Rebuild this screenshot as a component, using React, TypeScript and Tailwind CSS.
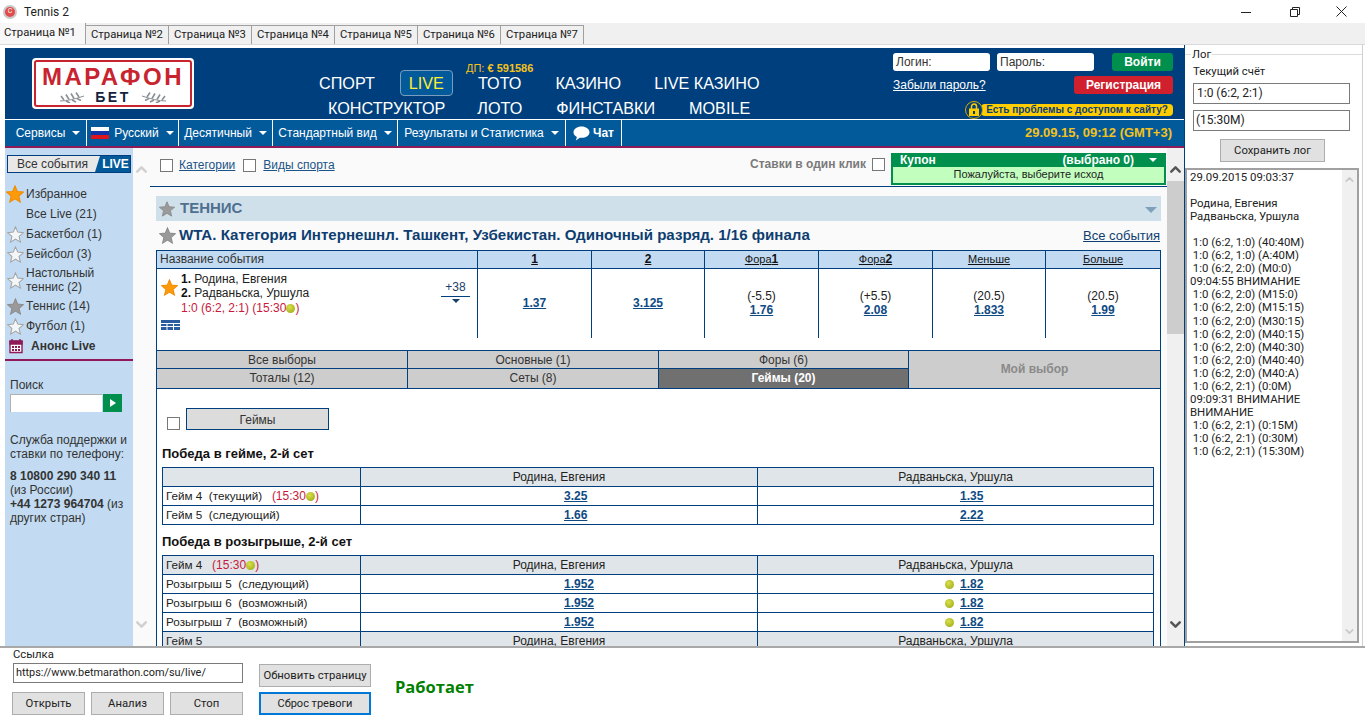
import { ChevronDown, ChevronUp } from 'lucide-react'

const tabs = ['Страница №2', 'Страница №3', 'Страница №4', 'Страница №5', 'Страница №6', 'Страница №7']

const sports = [
  { label: 'Баскетбол (1)', star: 'empty' },
  { label: 'Бейсбол (3)', star: 'empty' },
  { label: 'Настольный теннис (2)', star: 'empty', tall: true },
  { label: 'Теннис (14)', star: 'grey' },
  { label: 'Футбол (1)', star: 'empty' },
]

const logLines = [
  '29.09.2015 09:03:37',
  '\u00a0',
  'Родина, Евгения',
  'Радваньска, Уршула',
  '\u00a0',
  ' 1:0 (6:2, 1:0) (40:40M)',
  ' 1:0 (6:2, 1:0) (A:40M)',
  ' 1:0 (6:2, 2:0) (M0:0)',
  '09:04:55 ВНИМАНИЕ',
  ' 1:0 (6:2, 2:0) (M15:0)',
  ' 1:0 (6:2, 2:0) (M15:15)',
  ' 1:0 (6:2, 2:0) (M30:15)',
  ' 1:0 (6:2, 2:0) (M40:15)',
  ' 1:0 (6:2, 2:0) (M40:30)',
  ' 1:0 (6:2, 2:0) (M40:40)',
  ' 1:0 (6:2, 2:0) (M40:A)',
  ' 1:0 (6:2, 2:1) (0:0M)',
  '09:09:31 ВНИМАНИЕ',
  'ВНИМАНИЕ',
  ' 1:0 (6:2, 2:1) (0:15M)',
  ' 1:0 (6:2, 2:1) (0:30M)',
  ' 1:0 (6:2, 2:1) (15:30M)',
]

function StarIcon({ kind, size = 18 }: { kind: string; size?: number }) {
  const fill = kind === 'orange' ? '#ff9a0a' : kind === 'grey' ? '#9a9a9a' : '#f4f6f8'
  const stroke = kind === 'orange' ? '#f08c00' : kind === 'grey' ? '#8c8c8c' : '#a3a3a3'
  return (
    <svg width={size} height={size} viewBox="0 0 20 20" className="shrink-0">
      <polygon
        points="10,1 12.6,7.2 19.4,7.8 14.2,12.2 15.8,18.9 10,15.3 4.2,18.9 5.8,12.2 0.6,7.8 7.4,7.2"
        fill={fill}
        stroke={stroke}
        strokeWidth="1.2"
      />
    </svg>
  )
}

function Caret({ color = 'border-t-white' }: { color?: string }) {
  return <span className={`inline-block w-0 h-0 border-x-[4px] border-x-transparent border-t-[4px] ${color}`} />
}

function Ball() {
  return <span className="inline-block w-[9px] h-[9px] rounded-full bg-[radial-gradient(circle_at_40%_35%,#d9e04a,#97a414)] align-[-1px]" />
}

function Laurel({ flip }: { flip?: boolean }) {
  return (
    <svg width="26" height="12" viewBox="0 0 26 12" className={flip ? '-scale-x-100' : ''}>
      <path d="M1 10 C8 10 16 8 25 5" stroke="#8a8f94" strokeWidth="1" fill="none" />
      <path d="M5 9 L2 5 M10 8.5 L7 3.5 M15 7.5 L12 2.5 M20 6 L17 1.5 M7 10 L11 12 M13 9 L17 11 M18 7.5 L22 9.5" stroke="#8a8f94" strokeWidth="1.6" fill="none" />
    </svg>
  )
}

function Logo() {
  return (
    <div className="ml-[27px] mt-[10px] w-[162px] h-[51px] bg-white rounded-[4px] p-[2px] shrink-0">
      <div className="h-full border-2 border-[#c8242f] rounded-[3px] flex flex-col items-center">
        <div className="h-[27px] pt-[3px] text-[24px] leading-[24px] font-bold tracking-[2.5px] text-[#c8242f]">МАРАФОН</div>
        <div className="flex items-center gap-[10px] mt-[2px]">
          <Laurel />
          <span className="text-[14px] leading-[12px] font-bold tracking-[2.5px] text-[#14233f]">БЕТ</span>
          <Laurel flip />
        </div>
      </div>
    </div>
  )
}

function Header() {
  return (
    <div className="flex h-[71px] bg-[#003f7d] shrink-0">
      <Logo />
      {/* main menu */}
      <div className="ml-[125px] w-[574px] shrink-0 text-white text-[16.2px] leading-[25px]">
        <div className="h-[22px] pt-[14px] pl-[147px] text-[11px] leading-[12px] text-[#f4c21b]">
          ДП: <b>€ 591586</b>
        </div>
        <div className="flex items-center h-[26px]">
          <span>СПОРТ</span>
          <span className="ml-[25px] w-[53px] h-[26px] flex items-center justify-center rounded-[4px] border border-[#7b9dbd] bg-[#035a9b] text-[#ffee33]">LIVE</span>
          <span className="ml-[25px]">ТОТО</span>
          <span className="ml-[34px]">КАЗИНО</span>
          <span className="ml-[33px]">LIVE КАЗИНО</span>
        </div>
        <div className="flex items-center h-[25px]">
          <span className="ml-[9px]">КОНСТРУКТОР</span>
          <span className="ml-[32px]">ЛОТО</span>
          <span className="ml-[34px]">ФИНСТАВКИ</span>
          <span className="ml-[34px]">MOBILE</span>
        </div>
      </div>
      {/* login */}
      <div className="w-[280px] shrink-0 pt-[5px] text-[12px]">
        <div className="flex h-[18px]">
          <div className="w-[97px] bg-white rounded-[3px] pl-[3px] leading-[18px] text-[#333]">Логин:</div>
          <div className="ml-[7px] w-[97px] bg-white rounded-[3px] pl-[3px] leading-[18px] text-[#333]">Пароль:</div>
          <div className="ml-[18px] w-[61px] bg-[#008f4c] rounded-[3px] text-white font-bold text-center leading-[18px]">Войти</div>
        </div>
        <div className="flex h-[18px] mt-[5px]">
          <span className="text-white underline leading-[18px]">Забыли пароль?</span>
          <div className="ml-auto w-[99px] bg-[#d0202e] rounded-[3px] text-white font-bold text-center leading-[18px]">Регистрация</div>
        </div>
        <div className="flex items-center mt-[7px] h-[17px] pl-[72px]">
          <span className="w-[18px] h-[18px] rounded-full bg-[#003f7d] border border-[#d9a900] flex items-center justify-center shrink-0 z-10">
            <svg width="10" height="13" viewBox="0 0 10 13">
              <path d="M2.5 6V3.5a2.5 2.5 0 0 1 5 0V6" stroke="#ffcc00" strokeWidth="1.5" fill="none" />
              <path d="M0 5.5h10V13H0z" fill="#ffcc00" />
              <path d="M4 8h2v3H4z" fill="#003f7d" />
            </svg>
          </span>
          <span className="-ml-[2px] w-[192px] h-[12px] bg-[#ffcc00] rounded-[4px] text-[10px] leading-[12px] font-bold text-[#0b3f78] text-center">Есть проблемы с доступом к сайту?</span>
        </div>
      </div>
    </div>
  )
}

function NavItem({ width, children }: { width: string; children: React.ReactNode }) {
  return (
    <div className={`${width} h-full border-r border-white flex items-center justify-center gap-[7px] shrink-0`}>
      {children}
    </div>
  )
}

function NavBar() {
  return (
    <div className="flex items-center h-[26px] bg-[#035a9b] text-white text-[12px] mt-[1px] shrink-0">
      <NavItem width="w-[82px] pl-[5px]">Сервисы <Caret /></NavItem>
      <NavItem width="w-[92px]">
        <span className="flex flex-col w-[18px] h-[13px] shrink-0 -mr-[2px]">
          <span className="h-1/3 bg-white" />
          <span className="h-1/3 bg-[#1436a8]" />
          <span className="h-1/3 bg-[#e0141c]" />
        </span>
        Русский <Caret />
      </NavItem>
      <NavItem width="w-[94px]">Десятичный <Caret /></NavItem>
      <NavItem width="w-[125px]">Стандартный вид <Caret /></NavItem>
      <NavItem width="w-[168px]">Результаты и Статистика <Caret /></NavItem>
      <NavItem width="w-[56px]">
        <span className="flex items-center gap-[3px] font-bold">
          <svg width="17" height="15" viewBox="0 0 17 15">
            <path d="M8.5 0.5C4 0.5 0.5 3 0.5 6.2c0 2 1.3 3.7 3.4 4.7L2.8 14.5l4.1-2.8c.5.1 1 .1 1.6.1 4.5 0 8-2.5 8-5.6S13 .5 8.5.5z" fill="#fff" />
          </svg>
          Чат
        </span>
      </NavItem>
      <div className="ml-auto pr-[12px] text-[13px] font-bold text-[#f4c21b]">29.09.15, 09:12 (GMT+3)</div>
    </div>
  )
}

function Sidebar() {
  return (
    <div className="w-[128px] shrink-0 bg-[#c2dbf2] text-[12px] leading-[14px] text-[#333]">
      <div className="flex h-[18px] mt-[7px] ml-[2px] w-[124px] border border-[#003f7d] bg-[#e8e8e8]">
        <div className="w-[90px] pl-[9px] leading-[16px] whitespace-nowrap">Все события</div>
        <div className="flex-1 -ml-[3px] pl-[6px] bg-[#035a9b] text-white font-bold text-center leading-[16px] [clip-path:polygon(5px_0,100%_0,100%_100%,0_100%)]">LIVE</div>
      </div>
      <div className="mt-[11px]">
        <div className="h-[20px] flex items-center pl-[1px] gap-[1px]">
          <StarIcon kind="orange" />
          <span className="ml-[1px]">Избранное</span>
        </div>
        <div className="h-[20px] flex items-center pl-[21px]">Все Live (21)</div>
        {sports.map((s) => (
          <div key={s.label} className={`flex items-center pl-[2px] ${s.tall ? 'h-[32px]' : 'h-[20px]'} gap-[1px]`}>
            <StarIcon kind={s.star} size={17} />
            <span className="ml-[1px] w-[90px]">{s.label}</span>
          </div>
        ))}
        <div className="h-[20px] flex items-center pl-[3px]">
          <svg width="16" height="16" viewBox="0 0 16 16" className="shrink-0">
            <path d="M2 3.5h12v11H2z" fill="#fff" stroke="#8e1a57" strokeWidth="1.4" />
            <path d="M2 3h12v3H2zM4 1v3M12 1v3" fill="#8e1a57" stroke="#8e1a57" strokeWidth="1.4" />
            <path d="M4 8h2v2H4zM7 8h2v2H7zM10 8h2v2h-2zM4 11h2v2H4zM7 11h2v2H7zM10 11h2v2h-2z" fill="#8e1a57" />
          </svg>
          <span className="ml-[7px] font-bold">Анонс Live</span>
        </div>
      </div>
      <div className="h-[2px] bg-[#8e1a57] mt-[3px]" />
      <div className="pl-[5px] mt-[17px]">Поиск</div>
      <div className="flex h-[18px] mt-[2px] ml-[5px]">
        <div className="w-[92px] bg-white border-t border-l border-[#b0b0b0]" />
        <div className="ml-[1px] w-[19px] bg-[#008f4c] flex items-center justify-center">
          <span className="w-0 h-0 border-y-[4px] border-y-transparent border-l-[6px] border-l-white" />
        </div>
      </div>
      <div className="pl-[5px] mt-[21px] w-[127px]">Служба поддержки и ставки по телефону:</div>
      <div className="pl-[5px] mt-[8px] w-[124px]">
        <b>8 10800 290 340 11</b> (из России)
        <br />
        <b>+44 1273 964704</b> (из других стран)
      </div>
    </div>
  )
}

function Checkbox({ className = '' }: { className?: string }) {
  return <span className={`inline-block w-[13px] h-[13px] bg-white border border-[#777] shrink-0 ${className}`} />
}

function Odd({ value }: { value: string }) {
  return <span className="font-bold underline text-[#0e4a84]">{value}</span>
}

const headCols = ['1', '2', 'Фора1', 'Фора2', 'Меньше', 'Больше']

function EventTable() {
  return (
    <div className="text-[12px] text-[#222]">
      <div className="grid grid-cols-[320px_114px_113px_114px_114px_113px_115px] h-[18px] bg-[#c2dbf2] border-t border-[#003f7d] leading-[17px]">
        <div className="pl-[3px] text-[#333]">Название события</div>
        {headCols.map((c) => (
          <div key={c} className="border-l border-[#003f7d] text-center underline text-[#111]">
            {c.length > 1 ? (
              <span className="text-[11px]">
                {c.replace(/\d/, '')}
                <b className="text-[12px]">{c.match(/\d/)?.[0]}</b>
              </span>
            ) : (
              <b>{c}</b>
            )}
          </div>
        ))}
      </div>
      <div className="grid grid-cols-[320px_114px_113px_114px_114px_113px_115px] h-[70px] border-t border-[#003f7d] bg-white text-center">
        <div className="flex text-left">
          <div className="w-[24px] shrink-0 pl-[4px] pt-[10px]">
            <StarIcon kind="orange" size={17} />
            <svg width="19" height="10" viewBox="0 0 19 10" className="mt-[24px]">
              <path d="M0 0h19v10H0z" fill="#2a5da0" />
              <path d="M0 3.5h19M6 3.5v7M12.5 3.5v7M0 6.5h19" stroke="#fff" strokeWidth="1" />
            </svg>
          </div>
          <div className="pt-[3px] leading-[14.4px] text-[#222]">
            <div><b className="text-[#111]">1.</b> Родина, Евгения</div>
            <div><b className="text-[#111]">2.</b> Радваньска, Уршула</div>
            <div className="text-[#c8193c]">1:0 (6:2, 2:1) (15:30<Ball />)</div>
          </div>
          <div className="ml-auto mr-[7px] mt-[11px] w-[29px] h-[15px] flex flex-col items-center text-[#1a3f6b] leading-[14px]">
            <span>+38</span>
            <span className="w-full border-t border-[#003f7d] mt-[2px] flex justify-center pt-[2px]">
              <Caret color="border-t-[#1a3f6b]" />
            </span>
          </div>
        </div>
        <div className="border-l border-[#003f7d] pt-[25px]"><Odd value="1.37" /></div>
        <div className="border-l border-[#003f7d] pt-[25px]"><Odd value="3.125" /></div>
        {[['(-5.5)', '1.76'], ['(+5.5)', '2.08'], ['(20.5)', '1.833'], ['(20.5)', '1.99']].map(([a, b], i) => (
          <div key={i} className="border-l border-[#003f7d] pt-[20px] leading-[14px]">
            {a}
            <br />
            <Odd value={b} />
          </div>
        ))}
      </div>
    </div>
  )
}

function MarketTabs() {
  const cell = 'border-l border-[#003f7d] text-center'
  return (
    <div className="grid grid-cols-[250px_251px_250px_252px] grid-rows-[18px_19px] mt-[12px] bg-[#cdcdcd] text-[12px] text-[#333] leading-[19px] border-t border-b border-[#003f7d]">
      <div className="text-center border-b border-[#003f7d]">Все выборы</div>
      <div className={`${cell} border-b`}>Основные (1)</div>
      <div className={`${cell} border-b`}>Форы (6)</div>
      <div className={`${cell} row-span-2 flex items-center justify-center font-bold text-[#8a8a8a]`}>Мой выбор</div>
      <div className="text-center">Тоталы (12)</div>
      <div className={cell}>Сеты (8)</div>
      <div className={`${cell} bg-[#707070] text-white font-bold`}>Геймы (20)</div>
    </div>
  )
}

function Row({ label, left, right, head, ball }: { label: React.ReactNode; left?: string; right?: string; head?: boolean; ball?: boolean }) {
  return (
    <div className={`grid grid-cols-[197px_397px_396px] h-[19px] border-t border-[#003f7d] leading-[18px] ${head ? 'bg-[#e0e5e9]' : 'bg-white'}`}>
      <div className="pl-[3px] text-[11.7px] text-[#222] whitespace-pre">{label}</div>
      {head ? (
        <>
          <div className="border-l border-[#003f7d] text-center text-[12px] text-[#222]">Родина, Евгения</div>
          <div className="border-l border-[#003f7d] text-center text-[12px] text-[#222]">Радваньска, Уршула</div>
        </>
      ) : (
        <>
          <div className="border-l border-[#003f7d] pl-[203px] text-[12px]"><Odd value={left ?? ''} /></div>
          <div className={`border-l border-[#003f7d] text-[12px] ${ball ? 'pl-[187px]' : 'pl-[202px]'}`}>
            {ball && <span className="mr-[6px]"><Ball /></span>}
            <Odd value={right ?? ''} />
          </div>
        </>
      )}
    </div>
  )
}

const Clock = () => (
  <span className="text-[12px] text-[#c8193c]">(15:30<Ball />)</span>
)

function Markets() {
  return (
    <div className="pl-[5px] bg-white">
      <div className="flex pt-[19px] pl-[5px] items-end">
        <Checkbox />
        <div className="ml-[6px] w-[143px] h-[22px] border border-[#003f7d] bg-[#dcdcdc] text-center text-[12px] leading-[22px] text-[#333]">Геймы</div>
      </div>
      <div className="mt-[16px] text-[13px] leading-[16px] font-bold text-[#111]">Победа в гейме, 2-й сет</div>
      <div className="mt-[5px] w-[992px] border-x border-b border-[#003f7d]">
        <Row head label="" />
        <Row label={<>Гейм 4  (текущий)   <Clock /></>} left="3.25" right="1.35" />
        <Row label="Гейм 5  (следующий)" left="1.66" right="2.22" />
      </div>
      <div className="mt-[9px] text-[13px] leading-[16px] font-bold text-[#111]">Победа в розыгрыше, 2-й сет</div>
      <div className="mt-[5px] w-[992px] border-x border-[#003f7d]">
        <Row head label={<>Гейм 4   <Clock /></>} />
        <Row label="Розыгрыш 5  (следующий)" left="1.952" right="1.82" ball />
        <Row label="Розыгрыш 6  (возможный)" left="1.952" right="1.82" ball />
        <Row label="Розыгрыш 7  (возможный)" left="1.952" right="1.82" ball />
        <Row head label="Гейм 5" />
      </div>
    </div>
  )
}

function MainColumn() {
  return (
    <div className="w-[1017px] shrink-0 bg-[#fafafa] overflow-hidden">
      <div className="flex h-[38px] border-b border-[#003f7d] box-content text-[12px]">
        <div className="flex items-start pl-[10px] pt-[11px]">
          <Checkbox />
          <span className="ml-[6px] -mt-[1px] underline text-[#1b5486] leading-[14px]">Категории</span>
          <Checkbox className="ml-[8px]" />
          <span className="ml-[7px] -mt-[1px] underline text-[#1b5486] leading-[14px]">Виды спорта</span>
        </div>
        <div className="ml-auto flex items-start pt-[8px] font-bold text-[#7a7a7a]">
          <span className="mr-[6px] leading-[16px]">Ставки в один клик</span>
          <Checkbox className="mt-[2px] mr-[6px]" />
          <div className="w-[275px] h-[32px] -mt-[3px] mr-[1px] bg-[#008f4c] px-[2px]">
            <div className="flex items-center h-[14px] pl-[7px] pr-[7px] text-white leading-[14px]">
              <span>Купон</span>
              <span className="ml-auto mr-[15px]">(выбрано 0)</span>
              <Caret />
            </div>
            <div className="h-[16px] bg-[#c2ffbe] text-center text-[11px] font-normal leading-[15px] text-[#222]">Пожалуйста, выберите исход</div>
          </div>
        </div>
      </div>
      <div className="ml-[6px] w-[1005px] mt-[9px]">
        <div className="flex items-center h-[25px] bg-[#d0e0eb] pl-[3px] gap-[5px] text-[15px] font-bold text-[#4f6f8f]">
          <StarIcon kind="grey" size={16} />
          ТЕННИС
          <span className="ml-auto mr-[4px]"><span className="inline-block w-0 h-0 border-x-[6px] border-x-transparent border-t-[6px] border-t-[#7fa0bd]" /></span>
        </div>
        <div className="flex items-center h-[29px] pl-[3px] gap-[3px] text-[15.1px] font-bold text-[#0e3e71]">
          <StarIcon kind="grey" size={17} />
          WTA. Категория Интернешнл. Ташкент, Узбекистан. Одиночный разряд. 1/16 финала
          <span className="ml-auto mr-[1px] text-[13px] font-normal underline">Все события</span>
        </div>
        <div className="border-x border-[#003f7d] h-[396px] bg-white">
          <EventTable />
          <MarketTabs />
          <Markets />
        </div>
      </div>
    </div>
  )
}

function LogPanel() {
  return (
    <div className="flex-1 relative text-[11.3px] text-[#222] font-['Roboto',sans-serif] border-r border-[#d0d0d0] mr-[2px]">
      <div className="h-[10px] border-b border-[#dcdcdc] mb-[1px]" />
      <span className="absolute left-[6px] top-[3px] bg-white px-[1px] leading-[14px]">Лог</span>
      <div className="pl-[8px] leading-[16px] pt-[8px]">Текущий счёт</div>
      <div className="ml-[8px] mt-[3px] w-[157px] h-[21px] border border-[#7a7a7a] pl-[3px] leading-[19px] text-[12px]">1:0 (6:2, 2:1)</div>
      <div className="ml-[8px] mt-[6px] w-[157px] h-[21px] border border-[#7a7a7a] pl-[2px] leading-[19px] text-[12px]">(15:30M)</div>
      <div className="ml-[35px] mt-[8px] w-[105px] h-[23px] border border-[#adadad] bg-[#e1e1e1] text-center leading-[21px]">Сохранить лог</div>
      <div className="mt-[6px] w-[174px] h-[475px] border-2 border-[#a0a0a0] bg-white flex">
        <div className="flex-1 pl-[3px] pt-[1px] text-[11.4px] leading-[13.05px] whitespace-pre">
          {logLines.map((l, i) => (
            <div key={i}>{l}</div>
          ))}
        </div>
        <div className="w-[15px] bg-[#f0f0f0] flex flex-col justify-between items-center py-[3px] text-[#c8c8c8]">
          <ChevronUp size={13} strokeWidth={3} />
          <ChevronDown size={13} strokeWidth={3} />
        </div>
      </div>
    </div>
  )
}

export default function App() {
  return (
    <div className="w-[1365px] h-[723px] overflow-hidden bg-white flex flex-col font-['Liberation_Sans',Arial,sans-serif]">
      {/* title bar */}
      <div className="flex items-center h-[23px] shrink-0 text-[12px] text-[#222] font-['Roboto',sans-serif]">
        <span className="ml-[3px] w-[14px] h-[14px] rounded-full bg-[#e04b4b] border-2 border-[#c9c9c9] flex items-center justify-center text-[7px] leading-none text-white">C</span>
        <span className="ml-[7px]">Tennis 2</span>
        <div className="ml-auto flex items-center">
          <svg width="10" height="10" viewBox="0 0 10 10" className="mr-[39px]"><path d="M0 5.5h10" stroke="#222" /></svg>
          <svg width="10" height="10" viewBox="0 0 10 10" className="mr-[36px]"><path d="M.5 2.5h7v7h-7zM2.5 2.5v-2h7v7h-2" stroke="#222" fill="none" /></svg>
          <svg width="11" height="11" viewBox="0 0 11 11" className="mr-[18px]"><path d="M.5.5l10 10M10.5.5l-10 10" stroke="#222" /></svg>
        </div>
      </div>
      {/* page tabs */}
      <div className="flex h-[22px] shrink-0 bg-[#f0f0f0] border-b border-[#d9d9d9] text-[11.3px] text-[#222] font-['Roboto',sans-serif] items-end whitespace-nowrap">
        <div className="w-[86px] h-[21px] bg-[#f7f7f7] pl-[4px] leading-[19px] border-r border-[#a0a0a0]">Страница №1</div>
        {tabs.map((t) => (
          <div key={t} className="w-[83px] h-[19px] pl-[5px] leading-[18px] border-r border-t border-[#a0a0a0] shrink-0">{t}</div>
        ))}
      </div>
      {/* browser + log */}
      <div className="flex h-[601px] shrink-0">
        <div className="w-[1185px] shrink-0 pl-[5px] pt-[3px] border-r border-[#003f7d]">
          <div className="h-[598px] flex flex-col overflow-hidden">
            <Header />
            <NavBar />
            <div className="h-[2px] bg-[#8e1a57] shrink-0" />
            <div className="flex flex-1 min-h-0">
              <Sidebar />
              <div className="w-[17px] shrink-0 bg-[#fafafa] flex flex-col justify-between items-center pt-[13px] pb-[13px] text-[#d0d0d0]">
                <ChevronUp size={17} strokeWidth={3.5} />
                <ChevronDown size={17} strokeWidth={3.5} />
              </div>
              <MainColumn />
              <div className="flex-1 bg-[#f0f0f0] flex flex-col items-center pt-[13px] text-[#555]">
                <ChevronUp size={17} strokeWidth={3.5} />
                <div className="w-full h-[153px] bg-[#cdcdcd] mt-[3px]" />
                <div className="mt-auto mb-[13px]"><ChevronDown size={17} strokeWidth={3.5} /></div>
              </div>
            </div>
          </div>
        </div>
        <LogPanel />
      </div>
      {/* bottom controls */}
      <div className="flex flex-1 border-t-2 border-[#a8a8a8] text-[11.3px] text-[#222] font-['Roboto',sans-serif] whitespace-nowrap">
        <div className="ml-[12px] w-[231px] shrink-0">
          <div className="pl-[1px] leading-[14px]">Ссылка</div>
          <div className="ml-[1px] w-[230px] h-[20px] mt-[1px] border border-[#7a7a7a] pl-[2px] leading-[18px] text-[10.9px]">https://www.betmarathon.com/su/live/</div>
          <div className="flex gap-[6px] mt-[9px]">
            <div className="w-[73px] h-[23px] border border-[#adadad] bg-[#e1e1e1] text-center leading-[21px]">Открыть</div>
            <div className="w-[73px] h-[23px] border border-[#adadad] bg-[#e1e1e1] text-center leading-[21px]">Анализ</div>
            <div className="w-[73px] h-[23px] border border-[#adadad] bg-[#e1e1e1] text-center leading-[21px]">Стоп</div>
          </div>
        </div>
        <div className="ml-[16px] w-[112px] shrink-0 pt-[16px]">
          <div className="h-[23px] border border-[#adadad] bg-[#e1e1e1] text-center leading-[21px]">Обновить страницу</div>
          <div className="h-[23px] mt-[5px] border-2 border-[#0078d7] bg-[#e1e1e1] text-center leading-[19px] text-[11px]">Сброс тревоги</div>
        </div>
        <div className="ml-[24px] mt-[29px] text-[16.5px] leading-[20px] font-bold text-[#008000] font-['Open_Sans',sans-serif]">Работает</div>
      </div>
    </div>
  )
}
